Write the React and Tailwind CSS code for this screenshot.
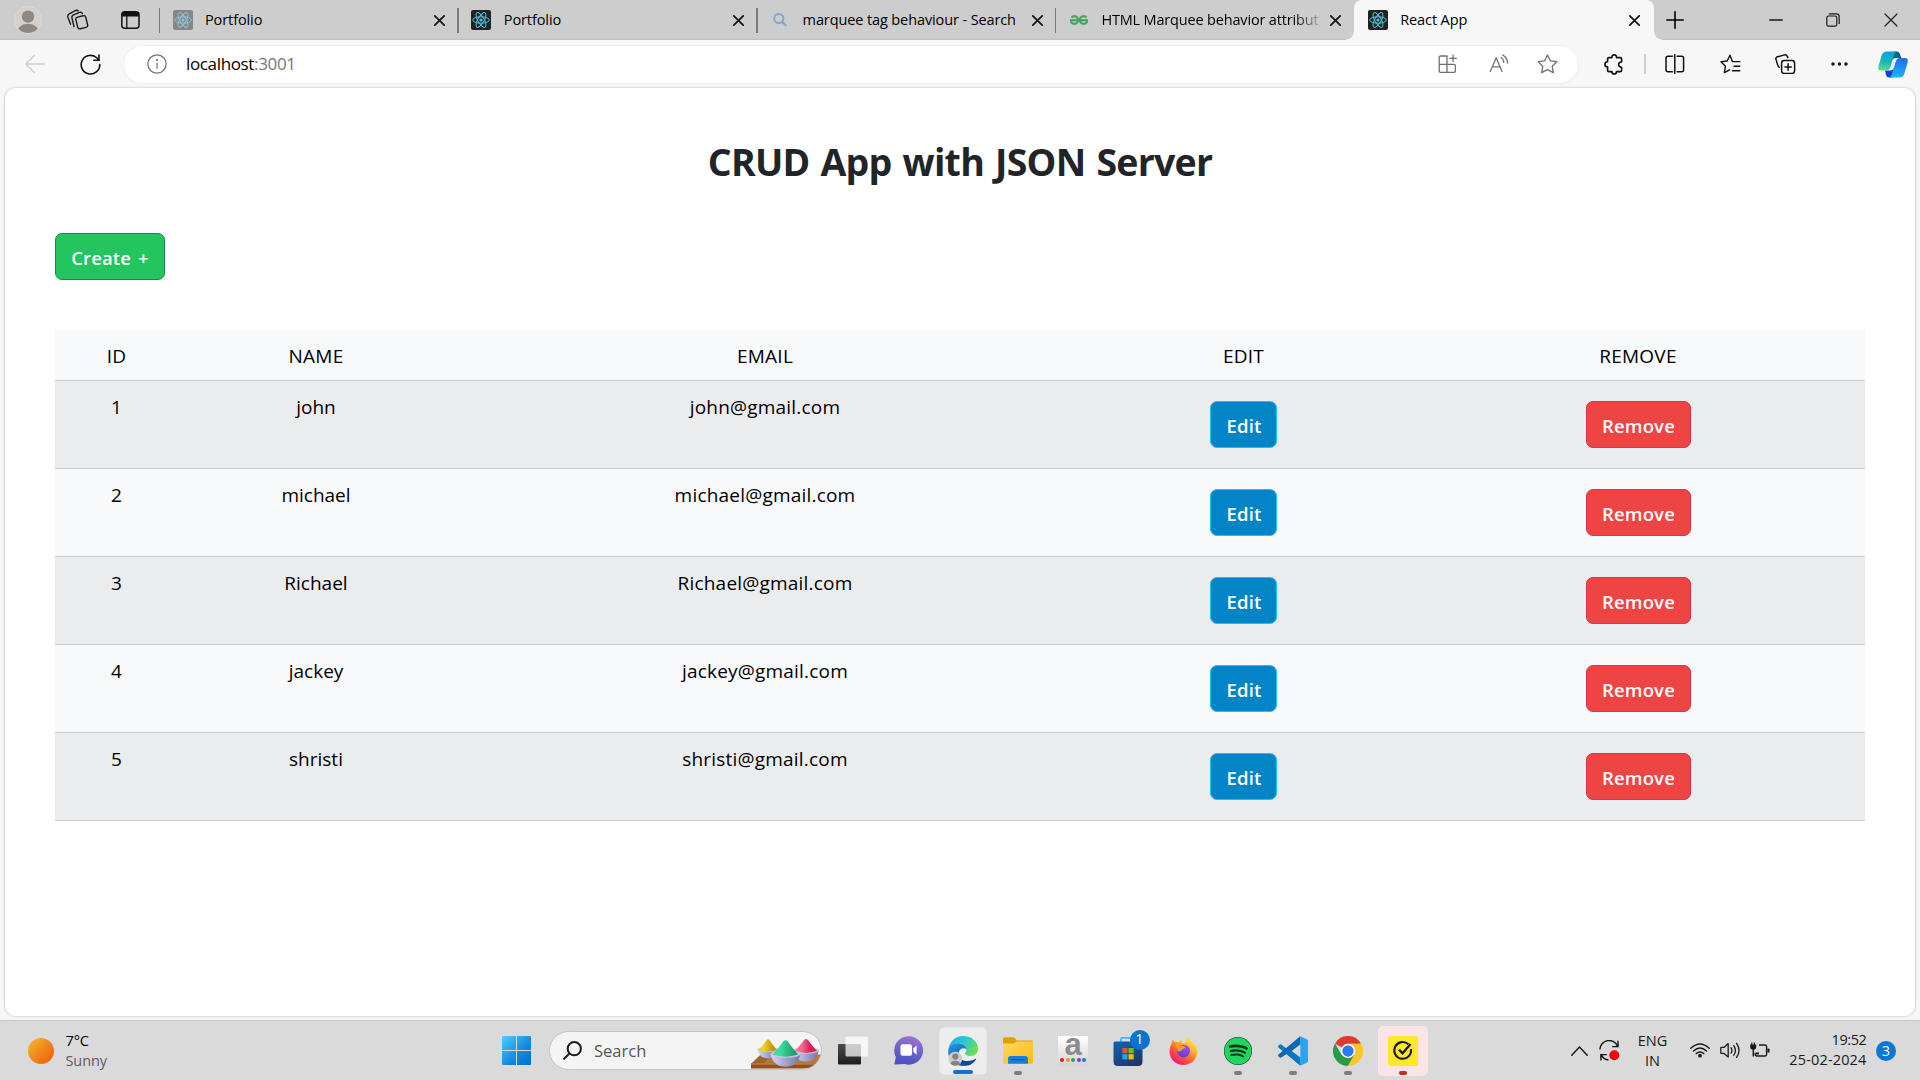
import React from "react";
import { FaSpotify } from "react-icons/fa";
import { SiGeeksforgeeks } from "react-icons/si";

function Stroke({ w, h, vb, sw = 1.4, color = "#1a1a1a", children, className = "" }) {
  return (
    <svg width={w} height={h} viewBox={vb || `0 0 ${w} ${h}`} fill="none" stroke={color} strokeWidth={sw} strokeLinecap="round" strokeLinejoin="round" className={"shrink-0 " + className}>
      {children}
    </svg>
  );
}

/* ---------- Browser chrome ---------- */

function ReactFavicon({ faded }) {
  const c = faded ? "#8cc5d8" : "#4fc3e0";
  return (
    <svg width="20" height="20" viewBox="0 0 20 20" className="shrink-0">
      <rect width="20" height="20" rx="2" fill={faded ? "#868686" : "#222"} />
      <g fill="none" stroke={c} strokeWidth="1">
        <ellipse cx="10" cy="10" rx="8.3" ry="3.2" />
        <ellipse cx="10" cy="10" rx="8.3" ry="3.2" transform="rotate(60 10 10)" />
        <ellipse cx="10" cy="10" rx="8.3" ry="3.2" transform="rotate(120 10 10)" />
      </g>
      <circle cx="10" cy="10" r="1.6" fill={c} />
    </svg>
  );
}

function SearchFavicon() {
  return (
    <Stroke w={20} h={20} sw={2} color="#7fa9d2">
      <circle cx="8.8" cy="8.5" r="4.6" />
      <path d="M12.3 12 L15.7 15.4" />
    </Stroke>
  );
}

function CloseX({ size = 11, sw = 1.7, color = "#111" }) {
  return (
    <Stroke w={size} h={size} vb="0 0 11 11" sw={sw} color={color}>
      <path d="M0.8 0.8 L10.2 10.2 M10.2 0.8 L0.8 10.2" />
    </Stroke>
  );
}

const tabs = [
  { title: "Portfolio", icon: <ReactFavicon faded />, cls: "tracking-[-0.1px]" },
  { title: "Portfolio", icon: <ReactFavicon />, cls: "tracking-[-0.1px]" },
  { title: "marquee tag behaviour - Search", icon: <SearchFavicon />, cls: "tracking-[-0.11px]" },
  { title: "HTML Marquee behavior attribut", icon: <SiGeeksforgeeks size={18} color="#43a55a" stroke="#43a55a" strokeWidth="0.8" className="shrink-0" />, cls: "tracking-[-0.17px]", fade: true },
  { title: "React App", icon: <ReactFavicon />, cls: "tracking-[-0.1px]", active: true },
];

function Tab({ tab }) {
  return (
    <div className={"relative flex h-10 shrink-0 items-center " + (tab.active ? "w-[300px] rounded-t-[8px] bg-[#f7f7f7]" : "w-[298.8px]")}>
      {!tab.active && <div className="h-[25px] w-[1.5px] shrink-0 bg-[#7b7b7b]" />}
      <div className={"flex w-5 justify-center " + (tab.active ? "ml-[14px]" : "ml-[12.5px]")}>{tab.icon}</div>
      <div className={"ml-[12.5px] w-[219px] whitespace-nowrap text-[14.5px] leading-[20px] text-black " + (tab.fade ? "[mask-image:linear-gradient(to_right,black_88%,rgba(0,0,0,0.15))]" : "")}>
        <span className={tab.cls}>{tab.title}</span>
      </div>
      <div className="ml-[10px] pt-px"><CloseX /></div>
      {tab.active && (
        <>
          <div className="absolute -left-2 bottom-0 h-2 w-2 bg-[radial-gradient(circle_at_0_0,#cdcdcd_7px,#f7f7f7_8px)]" />
          <div className="absolute -right-2 bottom-0 h-2 w-2 bg-[radial-gradient(circle_at_100%_0,#cdcdcd_7px,#f7f7f7_8px)]" />
        </>
      )}
    </div>
  );
}

function TabBar() {
  return (
    <div className="flex h-10 shrink-0 items-center bg-[linear-gradient(#cdcdcd_0,#cdcdcd_38px,#bdbdbd_40px)]">
      <div className="ml-[14px] flex h-7 w-7 items-center justify-center overflow-hidden rounded-full border border-[#dedbd6] bg-[#d3d0ca]">
        <svg width="26" height="26" viewBox="0 0 26 26"><circle cx="13" cy="9.6" r="6.2" fill="#8c8783" /><path d="M2.5 24a10.5 7.2 0 0 1 21 0v4h-21z" fill="#8c8783" /></svg>
      </div>
      <Stroke w={22} h={22} className="ml-[25px]" sw={1.4}>
        <rect x="9.6" y="7.2" width="10.2" height="12" rx="2.2" transform="rotate(-14 15 13)" />
        <path d="M7 17.6 L4.9 8.9 Q4.5 6.7 6.5 5.8 L12.6 3.4 Q14.6 2.8 15.4 4.6" />
        <path d="M3.6 15.2 L1 8.4 Q0.2 5.9 2.2 4.8 L8.8 1.4 Q10.4 0.8 11.2 2" />
      </Stroke>
      <svg width="19" height="18" viewBox="0 0 19 18" className="ml-[32px]"><rect x="0.8" y="0.8" width="17.2" height="16.4" rx="3" fill="none" stroke="#111" strokeWidth="1.5" /><path d="M1 5.4V3.6A2.8 2.8 0 0 1 3.8 0.8H15A2.8 2.8 0 0 1 18 3.6V5.4z" fill="#111" /><path d="M5.8 5V17" stroke="#111" strokeWidth="1.3" /></svg>
      <div className="ml-[18.5px] flex">{tabs.map((t, i) => <Tab key={i} tab={t} />)}</div>
      <Stroke w={18} h={18} className="ml-[12.5px]" sw={1.6} color="#000"><path d="M9 0.8V17.2M0.8 9H17.2" /></Stroke>
      <Stroke w={14} h={14} className="ml-[85px]" sw={1.3}><path d="M0.7 7H13.3" /></Stroke>
      <Stroke w={14} h={14} className="ml-[43px]" sw={1.2}><rect x="0.8" y="3" width="10" height="10.2" rx="1.8" /><path d="M3.4 0.8H10.6Q13.2 0.8 13.2 3.4V10.4" /></Stroke>
      <div className="ml-[44px]"><CloseX size={14} sw={1} color="#222" /></div>
    </div>
  );
}

function CopilotLogo() {
  return (
    <svg width="30" height="27" viewBox="0 0 30 27" className="shrink-0">
      <defs>
        <linearGradient id="cpA" x1="0.5" y1="0" x2="0.3" y2="1"><stop offset="0" stopColor="#0aa0e0" /><stop offset="0.5" stopColor="#18b3b8" /><stop offset="1" stopColor="#5ddc8e" /></linearGradient>
        <linearGradient id="cpB" x1="0.6" y1="0" x2="0.4" y2="1"><stop offset="0" stopColor="#1f6fe0" /><stop offset="0.6" stopColor="#1c9cf5" /><stop offset="1" stopColor="#18b6fa" /></linearGradient>
      </defs>
      <path d="M15.5 0.5H19Q21.3 0.5 22 3L23.2 7H18Q15 7 14 10z" fill="#0d5f8f" />
      <path d="M14.5 26.5H11Q8.7 26.5 8 24L7 19.5H12Q15 19.5 16 16z" fill="#1a3fd0" />
      <path d="M8.5 0.5H19Q16.8 1 16 4L12.4 16Q11.2 19.5 8 19.5H3Q-0.5 19.5 0.4 15.5L3.8 4Q5 0.5 8.5 0.5z" fill="url(#cpA)" />
      <path d="M21.5 26.5H11Q13.2 26 14 23L17.6 11Q18.8 7 22 7H27Q30.5 7 29.6 11.5L26.2 23Q25 26.5 21.5 26.5z" fill="url(#cpB)" />
    </svg>
  );
}

function Toolbar() {
  const g = "#707070";
  return (
    <div className="flex h-[48px] shrink-0 items-center bg-[#f7f7f7]">
      <Stroke w={20} h={18} className="ml-[25px]" sw={1.3} color="#cfcfcf"><path d="M19.3 9H0.8M9.3 0.8L0.8 9L9.3 17.2" /></Stroke>
      <Stroke w={21} h={21} className="ml-[34.5px]" sw={1.6} color="#111"><path d="M19.8 10.5A9.3 9.3 0 1 1 17 4L19 6.2" /><path d="M19 1V6.3H13.8" /></Stroke>
      <div className="ml-[23.5px] flex h-[37px] w-[1454px] shrink-0 items-center rounded-full bg-white shadow-[0_0_3px_rgba(0,0,0,0.08)]">
        <Stroke w={20} h={20} className="ml-[23px]" sw={1.2} color={g}><circle cx="10" cy="10" r="9.2" /><path d="M10 9V14.3" /><circle cx="10" cy="6" r="0.5" fill={g} /></Stroke>
        <div className="ml-[19px] text-[17px] leading-[24px] tracking-[-0.35px] text-[#777]"><span className="text-black">localhost</span>:3001</div>
        <div className="ml-auto flex items-center">
          <Stroke w={20} h={20} sw={1.3} color={g}><path d="M1.2 3.4Q1.2 2 2.6 2H9V18.3H2.6Q1.2 18.3 1.2 16.9zM1.2 10.3H16Q17.4 10.3 17.4 11.7V16.9Q17.4 18.3 16 18.3H9M15 1.2V7.4M11.8 4.3H18.4" /></Stroke>
          <Stroke w={21} h={20} className="ml-[31px]" sw={1.3} color={g}><path d="M1.3 17.6L7.2 3.8L13 17.6M3.4 12.8H11" /><path d="M12.2 3.5Q14.6 5 14.8 8.4M13.8 1.1Q18.3 3.4 18.6 9" /></Stroke>
          <Stroke w={21} h={20} className="ml-[27.5px]" sw={1.3} color={g}><path d="M10.5 1L13.4 6.8L19.8 7.7L15.2 12.2L16.3 18.7L10.5 15.7L4.7 18.7L5.8 12.2L1.2 7.7L7.6 6.8z" /></Stroke>
        </div>
        <div className="w-[20px]" />
      </div>
      <Stroke w={20} h={21} className="ml-[26px]" sw={1.6} color="#111"><path d="M3.6 7.8V4.8Q3.6 3.6 4.8 3.6H8Q7.8 0.9 10.2 0.9Q12.6 0.9 12.4 3.6H16.4Q17.6 3.6 17.6 4.8V8Q14.6 8 14.6 10.6Q14.6 13.2 17.6 13.2V16.4Q17.6 17.6 16.4 17.6H12.5Q12.4 20 10.2 20Q8 20 7.9 17.6H4.8Q3.6 17.6 3.6 16.4V12.9Q0.9 12.9 0.9 10.4Q0.9 7.8 3.6 7.8z" /></Stroke>
      <div className="ml-[20px] h-[20px] w-[1.5px] bg-[#cfcfcf]" />
      <Stroke w={20} h={20} className="ml-[19px]" sw={1.5} color="#111"><path d="M7.4 2.3H3Q1 2.3 1 4.3V15.7Q1 17.7 3 17.7H7.4M12.2 2.3H16.6Q18.6 2.3 18.6 4.3V15.7Q18.6 17.7 16.6 17.7H12.2M9.8 0.8V19.2" /></Stroke>
      <Stroke w={21} h={20} className="ml-[35px]" sw={1.4} color="#111"><path d="M19.8 7.6H12.4L10 1.2L7.2 7L1 7.8L5.4 12.2L4.4 18.6L9.6 15.8M14 12.2H19.8M12.4 16.8H19.8" /></Stroke>
      <Stroke w={21} h={20} className="ml-[34px]" sw={1.5} color="#111"><rect x="6.6" y="6.6" width="13" height="12.8" rx="2.6" /><path d="M13.1 9.8V16.2M9.9 13H16.3M4.2 13.2Q3.2 12.9 2.8 11.4L1 5.4Q0.4 3.4 2.5 2.8L9.6 0.9Q11.6 0.5 12.3 2.4L12.8 3.6" /></Stroke>
      <svg width="17" height="4" viewBox="0 0 17 4" className="ml-[35.5px]" fill="#111"><circle cx="2" cy="2" r="1.7" /><circle cx="8.5" cy="2" r="1.7" /><circle cx="15" cy="2" r="1.7" /></svg>
      <div className="ml-[29.5px]"><CopilotLogo /></div>
    </div>
  );
}

/* ---------- Page ---------- */

const users = [
  { id: 1, name: "john", email: "john@gmail.com" },
  { id: 2, name: "michael", email: "michael@gmail.com" },
  { id: 3, name: "Richael", email: "Richael@gmail.com" },
  { id: 4, name: "jackey", email: "jackey@gmail.com" },
  { id: 5, name: "shristi", email: "shristi@gmail.com" },
];

const grid = "grid grid-cols-[123px_276px_622px_335px_454px] text-center text-[19px] leading-[30px] text-black border-b border-[#c6c8ca] ";

function UserTable() {
  return (
    <div className="mt-[50px] w-[1810px]">
      <div className={grid + "h-[51px] bg-[#f8f9fb] pt-[11px] tracking-[0.25px]"}>
        {["ID", "NAME", "EMAIL", "EDIT", "REMOVE"].map((h) => <div key={h}>{h}</div>)}
      </div>
      {users.map((u) => (
        <div key={u.id} className={grid + "h-[88px] " + (u.id % 2 ? "bg-[#ebecee]" : "bg-[#f8f9fb]")}>
          <div className="pt-[11px]">{u.id}</div>
          <div className="pt-[11px]">{u.name}</div>
          <div className="pt-[11px] tracking-[0.2px]">{u.email}</div>
          <div className="flex items-start justify-center pt-[20px]">
            <button className="h-[47px] w-[67px] rounded-[7px] border border-[#0dcaf0] bg-[#0284c7] pl-[1px] pt-[3px] text-[18.5px] font-semibold tracking-[0.2px] text-white">Edit</button>
          </div>
          <div className="flex items-start justify-center pt-[20px]">
            <button className="h-[47px] w-[105px] rounded-[7px] border border-[#dc3545] bg-[#ef4444] pl-[1px] pt-[3px] text-[18.5px] font-semibold tracking-[0.2px] text-white">Remove</button>
          </div>
        </div>
      ))}
    </div>
  );
}

function Page() {
  return (
    <div className="mx-[5px] mb-[4px] flex h-[928px] flex-col rounded-[11px] bg-white px-[50px] shadow-[0_0_2px_1px_rgba(0,0,0,0.12)]">
      <h1 className="pt-[50px] text-center text-[37.5px] font-bold leading-[48px] tracking-[-0.75px] [word-spacing:2px] text-[#212529]">CRUD App with JSON Server</h1>
      <button className="mt-[47px] h-[47px] w-[110px] rounded-[7px] border border-[#198754] bg-[#22c55e] pt-[3px] text-[18.5px] font-semibold tracking-[0.15px] [word-spacing:2px] text-white">Create +</button>
      <UserTable />
    </div>
  );
}

/* ---------- Taskbar ---------- */

function HoliArt() {
  const bowl = (x, y, w, id, peak) => (
    <g transform={`translate(${x} ${y})`}>
      <path d={`M${-w} 0H${w}Q${w * 0.8} ${w * 0.85} 0 ${w * 0.85}Q${-w * 0.8} ${w * 0.85} ${-w} 0z`} fill="url(#bowl)" />
      <ellipse cx="0" cy="0" rx={w} ry={w * 0.25} fill="#c5c6e2" />
      <path d={`M${-w * 0.85} 0.6Q${-w * 0.45} ${-peak * 0.45} ${-w * 0.12} ${-peak}Q0 ${-peak * 1.08} ${w * 0.12} ${-peak}Q${w * 0.45} ${-peak * 0.45} ${w * 0.85} 0.6Q0 ${w * 0.32} ${-w * 0.85} 0.6z`} fill={`url(#${id})`} />
    </g>
  );
  return (
    <svg width="70" height="38" viewBox="0 0 70 38">
      <defs>
        <linearGradient id="bowl"><stop offset="0" stopColor="#d6d8ee" /><stop offset="0.5" stopColor="#a3a5cf" /><stop offset="1" stopColor="#7274a4" /></linearGradient>
        <linearGradient id="hy"><stop offset="0.3" stopColor="#f0cf1e" /><stop offset="0.8" stopColor="#b3950f" /></linearGradient>
        <linearGradient id="hg"><stop offset="0.3" stopColor="#3bdc9e" /><stop offset="0.85" stopColor="#1f9d6c" /></linearGradient>
        <linearGradient id="hp"><stop offset="0.3" stopColor="#fb6a93" /><stop offset="0.7" stopColor="#d41f58" /></linearGradient>
      </defs>
      <path d="M0 32L10 22.5H71V32z" fill="#b5793f" />
      <path d="M0 32L10 22.5H22L12 32z" fill="#a0632d" />
      <path d="M0 31.6H66V36.5H0z" fill="#8f4f1e" />
      <path d="M0 32H66" stroke="#d29a5c" strokeWidth="0.9" />
      {bowl(17, 17.5, 10.5, "hy", 9.8)}
      {bowl(55, 18.5, 13, "hp", 11)}
      {bowl(34.5, 22, 15, "hg", 13.2)}
    </svg>
  );
}

function SearchBox() {
  return (
    <div className="ml-[17.5px] flex h-[39px] w-[273px] items-center overflow-hidden rounded-full border border-[#c3c3c3] bg-[#f4f4f4]">
      <Stroke w={19} h={19} className="ml-[13px]" sw={2} color="#1c1c1c"><circle cx="11.3" cy="7.7" r="6.6" /><path d="M6.3 12.6L1.1 17.8" /></Stroke>
      <div className="ml-[12.5px] text-[16.5px] leading-6 text-[#555]">Search</div>
      <div className="ml-auto"><HoliArt /></div>
    </div>
  );
}

function TaskCell({ children, dot }) {
  return (
    <div className="relative flex h-[50px] w-[55px] shrink-0 items-center justify-center">
      {children}
      {dot && <div className="absolute bottom-[1px] h-[4px] w-[8px] rounded-full bg-[#7d7d7d]" />}
    </div>
  );
}

const EdgeIcon = () => (
  <svg width="30" height="30" viewBox="0 0 30 30">
    <defs>
      <linearGradient id="eA" x1="0" y1="0.2" x2="1" y2="0.6"><stop offset="0" stopColor="#28aee8" /><stop offset="0.5" stopColor="#2fc5d6" /><stop offset="1" stopColor="#6be04a" /></linearGradient>
      <linearGradient id="eB" x1="0" y1="0" x2="0.6" y2="1"><stop offset="0" stopColor="#1e9be8" /><stop offset="1" stopColor="#0b59b0" /></linearGradient>
    </defs>
    <path d="M0.3 14.5C1 6 7.2 0 15.2 0C24 0 30 6.2 30 12.6C30 17.4 26.4 20 22.6 20C18.8 20 17 18.6 17 17.6C17 16.9 18.4 16.2 18.4 13.8C18.4 10 14.6 7.3 10.4 7.3C4.6 7.3 1 11 0.3 14.5z" fill="url(#eA)" />
    <path d="M0.2 16C0.2 10.5 4.4 7.3 9.6 7.3C14.6 7.3 18.3 10 18.4 13.4C16.6 11.4 12 11.8 10.6 16.2C9 22 13.4 28 19.6 29.2C8.8 32.2 0.2 25 0.2 16z" fill="url(#eB)" />
    <path d="M11 15.4C9.4 21.5 14 25 19.4 25C23.4 25 26 23.8 27.6 22.7C28 22.4 28.4 22.8 28.1 23.2C25.6 27.2 21.8 29.6 18.6 29.6C12.4 29.6 7 21.5 11 15.4z" fill="#0f4a94" />
    <circle cx="7.3" cy="22.8" r="7" fill="#cfcdca" />
    <circle cx="7.3" cy="20.6" r="3.1" fill="#85817d" />
    <path d="M2.5 27.6Q3.2 24.7 7.3 24.7Q11.4 24.7 12.1 27.6Q10 29.8 7.3 29.8Q4.6 29.8 2.5 27.6z" fill="#85817d" />
  </svg>
);

const FolderIcon = () => (
  <svg width="30" height="27" viewBox="0 0 30 27">
    <defs><linearGradient id="fo" x1="0" y1="0" x2="1" y2="1"><stop offset="0" stopColor="#ffda66" /><stop offset="1" stopColor="#fbb90f" /></linearGradient></defs>
    <path d="M0 8V1.8Q0 0.3 1.5 0.3H10Q11 0.3 11.8 1.2L13.8 3.4H28.5Q30 3.4 30 5V10H0z" fill="#dfa008" />
    <path d="M0 6.4H10Q11.4 6.4 12.4 5.4L13.4 4.4H30V25.2Q30 26.7 28.5 26.7H1.5Q0 26.7 0 25.2z" fill="url(#fo)" />
    <path d="M5 26.7V21.6Q5 19 7.6 19H22.4Q25 19 25 21.6V26.7z" fill="#1580d8" />
    <path d="M9 22.7H21" stroke="#0a4f96" strokeWidth="1.2" strokeLinecap="round" />
  </svg>
);

const AmazonIcon = () => (
  <div className="flex h-[30px] w-[30px] flex-col items-center bg-gradient-to-b from-white to-[#d4d4d4]">
    <div className="h-[21px] font-['Liberation_Sans'] text-[31px] font-bold leading-[17px] text-[#8c8c8c]">a</div>
    <div className="mt-[1px] flex gap-[1.5px]">
      <i className="h-1 w-1 rounded-full bg-[#e8141c]" /><i className="h-1 w-1 rounded-full bg-[#f0911c]" /><i className="h-1 w-1 rounded-full bg-[#1fa35c]" /><i className="h-1 w-1 rounded-full bg-[#8a34c9]" /><i className="h-1 w-1 rounded-full bg-[#1779d6]" />
    </div>
  </div>
);

const StoreIcon = () => (
  <svg width="30" height="30" viewBox="0 0 30 30">
    <defs><linearGradient id="st" x1="0.2" y1="0" x2="0.8" y2="1"><stop offset="0" stopColor="#0d62b0" /><stop offset="1" stopColor="#233461" /></linearGradient></defs>
    <path d="M8 6V3Q8 1.8 9.2 1.8H20.8Q22 1.8 22 3V6" fill="none" stroke="#35bdf0" strokeWidth="1.8" />
    <path d="M0.5 7Q0.5 5.5 2 5.5H28Q29.5 5.5 29.5 7V25.5Q29.5 30 25 30H5Q0.5 30 0.5 25.5z" fill="url(#st)" />
    <rect x="9.3" y="12" width="5.2" height="5.2" fill="#f25022" /><rect x="15.5" y="12" width="5.2" height="5.2" fill="#7fba00" />
    <rect x="9.3" y="18.2" width="5.2" height="5.2" fill="#1aa7ee" /><rect x="15.5" y="18.2" width="5.2" height="5.2" fill="#ffb900" />
  </svg>
);

const FirefoxIcon = () => (
  <svg width="29" height="30" viewBox="0 0 29 30">
    <defs>
      <linearGradient id="ffA" x1="0.85" y1="0.05" x2="0.2" y2="0.95"><stop offset="0" stopColor="#fff04a" /><stop offset="0.35" stopColor="#ffb02e" /><stop offset="0.65" stopColor="#ff5a36" /><stop offset="1" stopColor="#f0147c" /></linearGradient>
      <radialGradient id="ffB" cx="0.6" cy="0.3" r="0.7"><stop offset="0" stopColor="#a44af5" /><stop offset="1" stopColor="#5a43c4" /></radialGradient>
    </defs>
    <path d="M18.2 0.6C20.6 2.2 22 4.4 22.6 6.2C24.2 6.8 25.4 8 26 9.2C28 11.6 28.6 14.2 28.3 17C27.6 24 21.6 29 14.5 29C6.8 29 0.6 23.4 0.5 15.6C0.5 12 1.6 9.2 2.8 7.4C2.8 6 3.2 4.6 4 3.6C4.4 5 5 5.6 6 6.2C7.6 5.8 8.6 6 9.6 6.4C10.4 5 12 4.2 13.6 4C12.8 5 12.6 6 12.8 7C14 7.2 15.6 7 16.4 6.4C17.4 4.6 18.2 2.8 18.2 0.6z" fill="url(#ffA)" />
    <circle cx="14.6" cy="15" r="6.3" fill="url(#ffB)" />
    <path d="M6 9.6C8 7.6 11.4 8 13 9.8L16.6 10.6C16.2 12.4 13.6 12.8 13 13.6C12.6 15.4 10.6 15 9.2 16C8.4 13.6 7.8 11.2 6 9.6z" fill="#ff9a2b" />
  </svg>
);

const VsCodeIcon = () => (
  <svg width="30" height="30" viewBox="0 0 30 30">
    <path d="M22 0.4L8.8 12.8L3.2 8.6Q2.4 8.1 1.7 8.6L0.4 9.8Q-0.3 10.6 0.4 11.4L22 29.6L23.5 24L23.5 5z" fill="#0a77c4" />
    <path d="M0.4 18.6L22 0.4L23.2 8.4L3.2 21.4Q2.4 21.9 1.7 21.4L0.4 20.2Q-0.2 19.4 0.4 18.6z" fill="#0a69b0" />
    <path d="M22 0.3L28.8 3.2Q30 3.8 30 5V25Q30 26.2 28.8 26.8L22 29.7Z" fill="#27a5f3" />
    <path d="M22.3 8.5V21.5L13.7 15z" fill="#dadada" />
  </svg>
);

const ChromeIcon = () => (
  <svg width="30" height="30" viewBox="0 0 30 30">
    <path d="M15 15L2 7.5A15 15 0 0 1 28 7.5z" fill="#dc3b30" />
    <path d="M2 7.5A15 15 0 0 0 15 30L21.5 18.7L15 15L8.5 18.7z" fill="#2a9a45" />
    <path d="M28 7.5A15 15 0 0 1 15 30L21.5 18.7L15 7.5z" fill="#fdc526" />
    <path d="M15 7.5H28L15 8z" fill="#dc3b30" />
    <circle cx="15" cy="15" r="7.2" fill="#fff" /><circle cx="15" cy="15" r="5.7" fill="#2d7bf0" />
  </svg>
);

function Taskbar() {
  return (
    <div className="flex h-[60px] shrink-0 items-center border-t border-[#c6c9c9] bg-[#dadada]">
      <div className="ml-[28px] h-[26px] w-[26px] rounded-full bg-[linear-gradient(135deg,#efb62e_10%,#f0881c_50%,#f0610c_90%)]" />
      <div className="ml-[11.5px] w-[90px] text-[14.5px] leading-[20px] tracking-[-0.1px]">
        <div className="text-black">7°C</div>
        <div className="text-[#5c5c5c]">Sunny</div>
      </div>
      <svg width="29" height="29" viewBox="0 0 29 29" className="ml-[346.5px] shrink-0">
        <defs><linearGradient id="win" x1="0" y1="0" x2="1" y2="1"><stop offset="0" stopColor="#4bd0ff" /><stop offset="0.6" stopColor="#1388dd" /><stop offset="1" stopColor="#0070cf" /></linearGradient></defs>
        <path d="M0 1Q0 0 1 0H14V14H0zM15 0H28Q29 0 29 1V14H15zM0 15H14V29H1Q0 29 0 28zM15 15H29V28Q29 29 28 29H15z" fill="url(#win)" />
      </svg>
      <SearchBox />
      <div className="ml-[4px] flex">
        <TaskCell>
          <svg width="30" height="29" viewBox="0 0 30 29">
            <defs><linearGradient id="tv" x1="0" y1="0" x2="0" y2="1"><stop offset="0" stopColor="#4c4c4c" /><stop offset="1" stopColor="#1d1d1d" /></linearGradient></defs>
            <rect x="0" y="8" width="23" height="20.5" rx="1" fill="url(#tv)" /><rect x="7.5" y="0.5" width="22.5" height="20" rx="1" fill="#fff" opacity="0.72" />
          </svg>
        </TaskCell>
        <TaskCell>
          <svg width="29" height="29" viewBox="0 0 29 29">
            <defs><linearGradient id="ch" x1="0.7" y1="0" x2="0.4" y2="1"><stop offset="0" stopColor="#a371cf" /><stop offset="0.5" stopColor="#6b65c6" /><stop offset="1" stopColor="#4b50c4" /></linearGradient></defs>
            <path d="M14.5 0.3A14.2 14.2 0 1 1 10.5 28L1.2 28.6Q0.2 28.6 0.5 27.6L1.8 21A14.2 14.2 0 0 1 14.5 0.3z" fill="url(#ch)" />
            <rect x="6.5" y="8.3" width="11.5" height="11.5" rx="2" fill="#fff" /><path d="M19.3 12.3L22.6 9.4V18.7L19.3 15.8z" fill="#fff" />
          </svg>
        </TaskCell>
        <TaskCell>
          <div className="relative flex h-[48px] w-[48px] items-center justify-center rounded-[5px] border border-[#e4e4e4] bg-[#ededed]">
            <EdgeIcon />
            <div className="absolute bottom-0 h-[4px] w-[20px] rounded-full bg-[#0d73cf]" />
          </div>
        </TaskCell>
        <TaskCell dot><FolderIcon /></TaskCell>
        <TaskCell><AmazonIcon /></TaskCell>
        <TaskCell>
          <StoreIcon />
          <div className="absolute right-[6px] top-[4px] flex h-[20px] w-[20px] items-center justify-center rounded-full bg-[#0a74cf] text-[14.5px] leading-none text-white">1</div>
        </TaskCell>
        <TaskCell><FirefoxIcon /></TaskCell>
        <TaskCell dot><div className="rounded-full bg-[#10331c]"><FaSpotify size={28} color="#1fd660" /></div></TaskCell>
        <TaskCell dot><VsCodeIcon /></TaskCell>
        <TaskCell dot><ChromeIcon /></TaskCell>
        <TaskCell>
          <div className="relative flex h-[50px] w-[50px] items-center justify-center rounded-[5px] bg-[#fce4e4]">
            <svg width="30" height="30" viewBox="0 0 30 30"><rect width="30" height="30" rx="2.5" fill="#fde92a" /><path d="M20.4 8.2A8.4 8.4 0 1 0 23 13" fill="none" stroke="#1a1a1a" strokeWidth="2.1" /><path d="M11 13.6L14.6 17.2L22.6 8" fill="none" stroke="#1a1a1a" strokeWidth="2.3" /></svg>
            <div className="absolute bottom-[1px] h-[4px] w-[8px] rounded-full bg-[#c42b1c]" />
          </div>
        </TaskCell>
      </div>
      <Stroke w={17} h={10} className="ml-[140.5px]" sw={1.5}><path d="M0.8 9.2L8.5 1L16.2 9.2" /></Stroke>
      <svg width="21" height="21" viewBox="0 0 21 21" className="ml-[11px]" fill="none" stroke="#111" strokeWidth="1.4">
        <path d="M0.9 9.5A9.2 9.2 0 0 1 18.6 6.2M19 0.8V6.6H13.2M9.5 20Q5 19.6 2.2 15.2M1.9 20.4V14.6H7.8" /><circle cx="15.3" cy="15.3" r="5" fill="#fb0007" stroke="none" />
      </svg>
      <div className="ml-[13.5px] w-[38px] text-center text-[14.5px] leading-[20px] text-[#1a1a1a]"><div>ENG</div><div>IN</div></div>
      <Stroke w={20} h={15} className="ml-[18px]" sw={1.4}><path d="M0.8 5.2Q10 -3.4 19.2 5.2M3.5 8Q10 2.2 16.5 8M6.2 10.6Q10 7.4 13.8 10.6" /><circle cx="10" cy="12.7" r="1.2" fill="#1a1a1a" /></Stroke>
      <Stroke w={21} h={17} className="ml-[10px]" sw={1.3}><path d="M0.8 6Q0.8 5.4 1.5 5.4H4L8.2 1.6V15L4 11.4H1.5Q0.8 11.4 0.8 10.7zM11 5.7Q12.8 8.4 11 11.1M13.8 3.6Q17 8.4 13.8 13.2M16.6 1.4Q21.4 8.4 16.6 15.4" /></Stroke>
      <svg width="20" height="17" viewBox="0 0 20 17" className="ml-[9px]"><path d="M9 3H15.2Q16.6 3 16.6 4.4V12.6Q16.6 14 15.2 14H6.6Q5.2 14 5.2 12.6V11" fill="none" stroke="#1a1a1a" strokeWidth="1.4" /><path d="M17.4 6.4H18.4Q19.6 6.4 19.6 7.6V9.4Q19.6 10.6 18.4 10.6H17.4z" fill="#1a1a1a" /><path d="M0.2 2.6H1.2V0.4H2.4V2.6H3.8V0.4H5V2.6H6.2V5.4Q6.2 7.4 4 7.8V14.4H2.6V7.8Q0.2 7.4 0.2 5.4z" fill="#1a1a1a" /><path d="M5.4 10.5V12.4H9V10.5z" fill="#1a1a1a" /></svg>
      <div className="mb-[2px] ml-auto text-right text-[14.5px] leading-[20px] text-[#1a1a1a]"><div className="tracking-[-0.4px]">19:52</div><div className="tracking-[0.15px]">25-02-2024</div></div>
      <div className="ml-[9.5px] mr-[24px] flex h-[20px] w-[20px] items-center justify-center rounded-full bg-[#0a78d6] text-[14px] leading-none text-white">3</div>
    </div>
  );
}

export default function App() {
  return (
    <div className="flex h-[1080px] w-[1920px] flex-col overflow-hidden bg-[#f7f7f7] font-['Open_Sans',sans-serif]">
      <TabBar />
      <Toolbar />
      <Page />
      <Taskbar />
    </div>
  );
}
